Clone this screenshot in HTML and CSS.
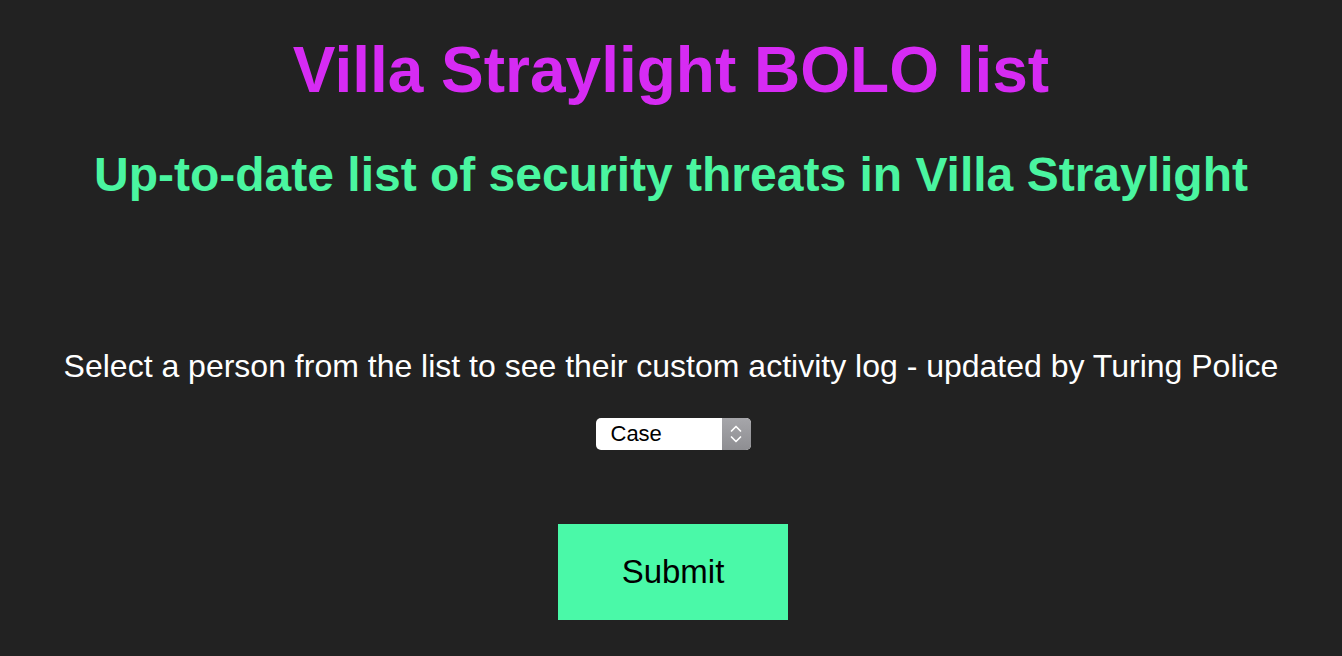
FILE: index.html
```html
<!DOCTYPE html>
<html>
<head>
<meta charset="utf-8">
<link rel="stylesheet" href="styles.css">
</head>
<body>
<main class="page">
  <h1 class="title">Villa Straylight BOLO list</h1>
  <h2 class="subtitle">Up-to-date list of security threats in Villa Straylight</h2>
  <form class="form">
    <p class="prompt">Select a person from the list to see their custom activity log - updated by Turing Police</p>
    <div class="select">
      <span class="select-value">Case</span>
      <span class="select-arrows">
        <svg width="14" height="24" viewBox="0 0 14 24"><path d="M2.5 9 L7 4.5 L11.5 9 M2.5 15 L7 19.5 L11.5 15" fill="none" stroke="#fff" stroke-width="1.7" stroke-linecap="round" stroke-linejoin="round"/></svg>
      </span>
    </div>
    <button type="button" class="submit">Submit</button>
  </form>
</main>
</body>
</html>
```
FILE: styles.css
```css
html, body {
  margin: 0;
  padding: 0;
  background: #222222;
}
body {
  font-family: "Liberation Sans", Arial, Helvetica, sans-serif;
}
.page {
  display: flex;
  flex-direction: column;
  align-items: center;
  text-align: center;
}
.title {
  margin: 30px 0 0;
  font-size: 64px;
  line-height: 80px;
  font-weight: bold;
  color: #d62bf3;
}
.subtitle {
  margin: 37px 0 0;
  font-size: 48px;
  line-height: 56px;
  font-weight: bold;
  color: #4af5a0;
}
.form {
  display: flex;
  flex-direction: column;
  align-items: center;
}
.prompt {
  margin: 145px 0 0;
  font-size: 32px;
  line-height: 36px;
  color: #ffffff;
}
.select {
  margin: 34px 0 0 4px;
  width: 155px;
  height: 32px;
  display: flex;
  border-radius: 5px;
  background: #ffffff;
  overflow: hidden;
}
.select-value {
  flex: 1;
  text-align: left;
  padding-left: 15px;
  font-size: 22px;
  line-height: 32px;
  color: #000;
}
.select-arrows {
  width: 29px;
  background: linear-gradient(#a6a6aa, #8e8e92);
  display: flex;
  align-items: center;
  justify-content: center;
}
.submit {
  margin: 74px 0 0 4px;
  width: 230px;
  height: 96px;
  border: none;
  background: #4af9a8;
  color: #000;
  font-family: "Liberation Sans", Arial, sans-serif;
  font-size: 33px;
  padding: 0;
}
```
